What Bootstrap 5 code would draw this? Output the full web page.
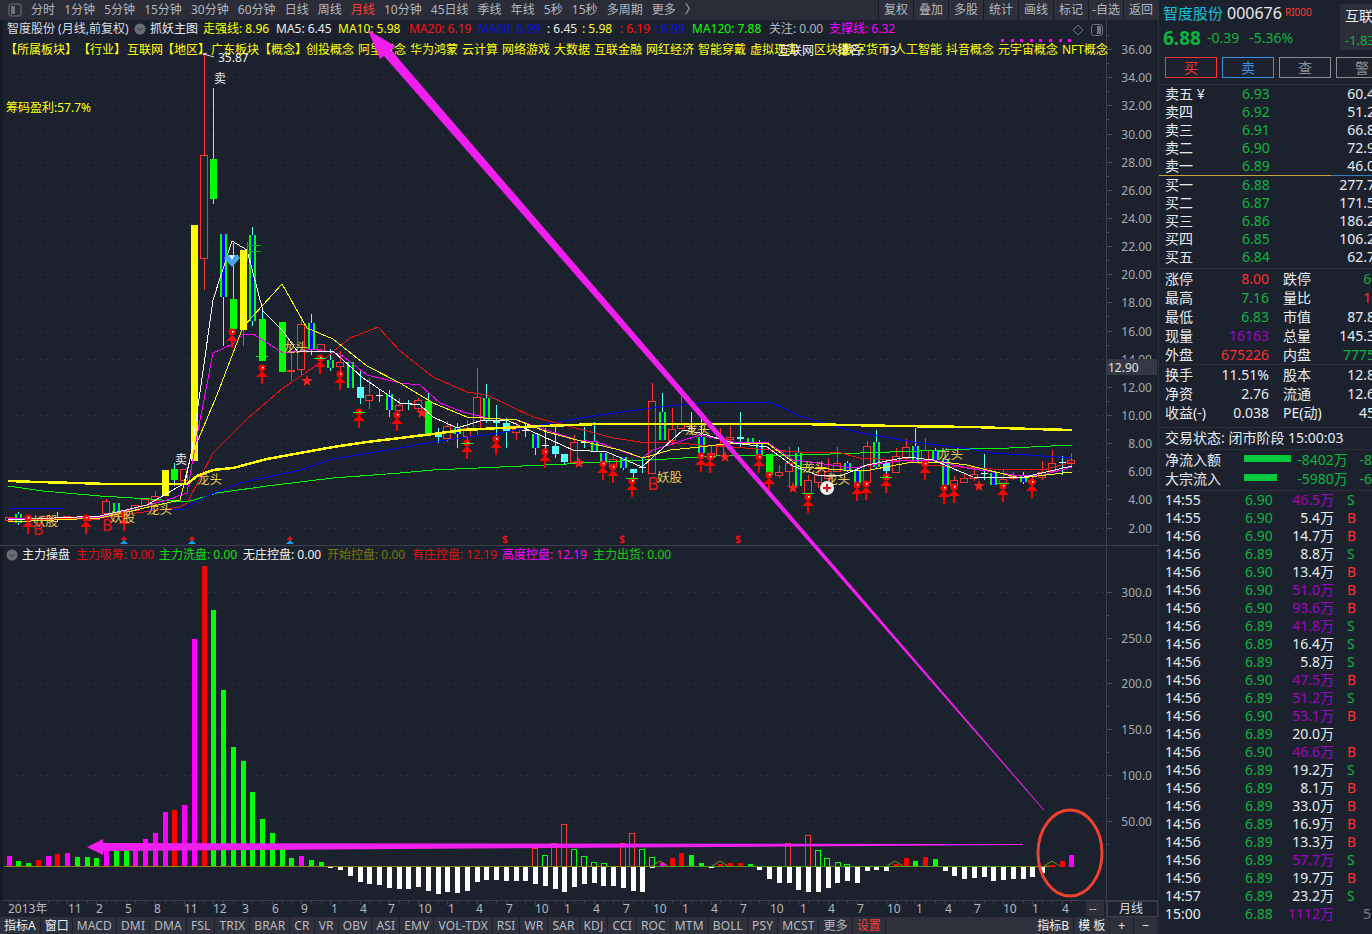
<!DOCTYPE html>
<html lang="zh-Hans">
<head>
  <meta charset="UTF-8" />
  <title>智度股份 月线</title>
  <link href="https://cdn.jsdelivr.net/npm/bootstrap@5.3.0/dist/css/bootstrap.min.css" rel="stylesheet" />
  <style>
    html, body { width: 1372px; height: 934px; overflow: hidden; background: #1c222d; }
    body, svg text { font-family: "Noto Sans", "Noto Sans CJK SC", sans-serif; }
    .stage { width: 1372px; height: 934px; position: relative; }
    .left-side { width: 1158px; }
    .right-side { width: 214px; border-left: 1px solid #2b303b; overflow: hidden; padding-left: 6px; color: #e6eaf0; }
    .tool-bar { height: 20px; background: #2a2d38; font-size: 12px; color: #b4b7bf; line-height: 20px; }
    .top-tabs { gap: 9.1px; padding-left: 8px; }
    .top-tabs .active-tab { color: #ff3b30; }
    .tool-btn { width: 35px; text-align: center; border-left: 1px solid #171b24; background: #2d303b; white-space: nowrap; }
    .chart-svg { display: block; }
    .bottom-tabs { height: 17px; background: #2e303c; font-size: 12px; line-height: 17px; color: #b9bcc4; letter-spacing: .15px; }
    .bottom-tabs span { padding: 0 4px; border-right: 1px solid #1c222d; white-space: nowrap; }
    .bottom-tabs .white-tab { color: #eef0f4; letter-spacing: 0; }
    .bottom-tabs .tight-tab { padding-right: 3px; }
    .bottom-tabs .red-tab { color: #ff3b30; letter-spacing: 0; }
    .bottom-right span { text-align: center; }
    .head-block { margin-left: -2px; }
    .head-title { height: 26px; font-size: 16px; line-height: 26px; }
    .head-title .stock-name { color: #0cc3d8; font-size: 15px; margin-right: 4px; }
    .head-title sup { color: #ff3b30; font-size: 10px; top: -3px; margin-left: 3px; }
    .head-price { height: 24px; line-height: 24px; color: #0cb53f; font-size: 14px; }
    .head-price b { font-size: 19px; width: 44px; }
    .head-price span { margin-right: 10px; }
    .sector-box { width: 32px; height: 46px; margin-top: 4px; background: #2c2f3a; font-size: 14px; padding-left: 5px; overflow: hidden; white-space: nowrap; line-height: 24px; }
    .sector-box div + div { color: #0cb53f; font-size: 13px; }
    .trade-btns { gap: 5px; margin-top: 7px; margin-bottom: 6px; }
    .trade-btns .btn { flex: 0 0 52px; height: 21px; padding: 0; font-size: 14px; line-height: 17px; border-radius: 0; border-width: 1.5px; background: transparent; }
    .btn-buy { border-color: #f33; color: #f33; }
    .btn-sell { border-color: #3a8fe0; color: #3a8fe0; }
    .btn-query { border-color: #8a8d93; color: #8a8d93; }
    .part-line { margin-left: -6px; border-top: 1px solid #2b303b; }
    .gold-line { margin-left: -6px; height: 1px; background: linear-gradient(90deg, #c9a13c 172px, #3a7fc0 172px); }
    .quote-line, .stat-line, .tick-line, .flow-line { display: flex; font-size: 14px; white-space: nowrap; }
    .quote-line { height: 18px; line-height: 18px; }
    .stat-line, .flow-line { height: 19px; line-height: 19px; }
    .tick-line { height: 18px; line-height: 18px; }
    .quote-line .q-name { width: 77px; }
    .quote-line .q-price { width: 60px; color: #0cb53f; }
    .quote-line .q-vol, .stat-line .s-val2 { flex: 1; text-align: right; margin-right: -3px; }
    .stat-line .s-name { width: 38px; }
    .stat-line .s-val { width: 66px; text-align: right; margin-right: 14px; }
    .stat-line .s-name2 { width: 42px; }
    .bid-box { padding-bottom: 2px; }
    .stat-box { padding-bottom: 5px; }
    .trade-state { height: 21px; line-height: 19px; font-size: 14px; }
    .flow-line .f-name { width: 80px; }
    .flow-line .f-bar { width: 54px; }
    .flow-line .f-bar i { display: block; height: 7px; margin-top: 5px; background: #00c83c; }
    .flow-bar-a { width: 47px !important; }
    .flow-bar-b { width: 33px !important; }
    .flow-end { margin-top: 2px; }
    .flow-line .f-val { width: 63px; color: #0cb53f; }
    .flow-line .f-more { color: #0cb53f; }
    .tick-line .t-time { width: 80px; }
    .tick-line .t-price { width: 40px; color: #0cb53f; }
    .tick-line .t-amt { width: 49px; text-align: right; }
    .tick-line .t-side { width: 16px; margin-left: 13px; }
    .tick-line .t-more { color: #7a7e86; }
    .c-up { color: #ff2d2d; }
    .c-down { color: #0cb53f; }
    .c-big { color: #a400c4; }
    .over-marks { position: absolute; left: 0; top: 0; pointer-events: none; }
  </style>
</head>
<body>

<div class="stage d-flex">
  <div class="left-side d-flex flex-column">
    <!-- 顶部周期栏 -->
    <div class="tool-bar d-flex">
      <div class="top-tabs d-flex align-items-center">
        <svg width="14" height="14" viewBox="0 0 14 14"><rect x="1" y="1" width="12" height="12" rx="2" fill="none" stroke="#70737c"/><rect x="3" y="3" width="4" height="8" fill="#70737c"/></svg>
        <span>分时</span><span>1分钟</span><span>5分钟</span><span>15分钟</span><span>30分钟</span><span>60分钟</span><span>日线</span><span>周线</span><span class="active-tab">月线</span><span>10分钟</span><span>45日线</span><span>季线</span><span>年线</span><span>5秒</span><span>15秒</span><span>多周期</span><span>更多</span><span>〉</span>
      </div>
      <div class="d-flex ms-auto">
        <span class="tool-btn">复权</span><span class="tool-btn">叠加</span><span class="tool-btn">多股</span><span class="tool-btn">统计</span><span class="tool-btn">画线</span><span class="tool-btn">标记</span><span class="tool-btn">-自选</span><span class="tool-btn">返回</span>
      </div>
    </div>

    <svg id="mainChart" class="chart-svg" width="1158" height="526" viewBox="0 20 1158 526"></svg>
    <svg id="subChart" class="chart-svg" width="1158" height="371" viewBox="0 546 1158 371"></svg>

    <!-- 底部指标栏 -->
    <div class="bottom-tabs d-flex">
      <span class="white-tab">指标A</span><span class="white-tab tight-tab">窗口</span><span>MACD</span><span>DMI</span><span>DMA</span><span>FSL</span><span>TRIX</span><span>BRAR</span><span>CR</span><span>VR</span><span>OBV</span><span>ASI</span><span>EMV</span><span>VOL-TDX</span><span>RSI</span><span>WR</span><span>SAR</span><span>KDJ</span><span>CCI</span><span>ROC</span><span>MTM</span><span>BOLL</span><span>PSY</span><span>MCST</span><span>更多</span><span class="red-tab">设置</span>
      <div class="bottom-right d-flex ms-auto">
        <span class="white-tab">指标B</span><span class="white-tab">模 板</span><span class="white-tab px-2">+</span><span class="white-tab px-2">−</span>
      </div>
    </div>
  </div>

  <div class="right-side">
    <div class="d-flex">
      <div class="head-block flex-grow-1">
        <div class="head-title"><span class="stock-name">智度股份</span>000676<sup>RI000</sup></div>
        <div class="head-price d-flex"><b>6.88</b><span>-0.39</span><span>-5.36%</span></div>
      </div>
      <div class="sector-box"><div>互联网</div><div>-1.83%</div></div>
    </div>
    <div class="trade-btns d-flex">
      <button class="btn btn-buy">买</button><button class="btn btn-sell">卖</button><button class="btn btn-query">查</button><button class="btn btn-query">警</button>
    </div>
    <div class="part-line"></div>
    <div id="askList"></div>
    <div class="gold-line"></div>
    <div id="bidList" class="bid-box"></div>
    <div class="part-line"></div>
    <div id="statA"></div>
    <div class="part-line"></div>
    <div id="statB" class="stat-box"></div>
    <div class="part-line"></div>
    <div class="trade-state">交易状态: 闭市阶段 15:00:03</div>
    <div class="part-line"></div>
    <div class="flow-line"><span class="f-name">净流入额</span><span class="f-bar"><i class="flow-bar-a"></i></span><span class="f-val">-8402万</span><span class="f-more">-8</span></div>
    <div class="flow-line"><span class="f-name">大宗流入</span><span class="f-bar"><i class="flow-bar-b"></i></span><span class="f-val">-5980万</span><span class="f-more">-6</span></div>
    <div class="part-line flow-end"></div>
    <div id="tickList"></div>
  </div>

  <!-- 手工标注 -->
  <svg class="over-marks" width="1372" height="934" viewBox="0 0 1372 934">
    <polygon points="368,30 395,46 391,50 1044.3,810 1043.7,810.4 384,56 380,59" fill="#f01ff0"/>
    <polygon points="87,847 103,839 103,843 1023,844 1023,845 103,851 103,855" fill="#f01ff0"/>
    <ellipse cx="1070" cy="853" rx="32" ry="43" fill="none" stroke="#f0402f" stroke-width="3"/>
  </svg>
</div>

<script>
  const GREEN = '#00ff00', RED = '#ff3232', CYAN = '#54ffff', YELLOW = '#ffff00', BLUE = '#0000ff', MAGENTA = '#ff00ff';
  const barX = i => Math.round(8.5 + 9.75 * i);

  // 文字
  function label(x, y, str, fill, size = 12, extra = '') {
    return `<text x="${x}" y="${y}" fill="${fill}" font-size="${size}" ${extra}>${str}</text>`;
  }
  function hline(x1, x2, y, color, dash = '') {
    return `<line x1="${x1}" x2="${x2}" y1="${y}" y2="${y}" stroke="${color}" ${dash ? `stroke-dasharray="${dash}"` : ''} shape-rendering="crispEdges"/>`;
  }
  function rect(x, y, w, h, fill, stroke = 'none') {
    return `<rect x="${x}" y="${y}" width="${w}" height="${h}" fill="${fill}" stroke="${stroke}" shape-rendering="crispEdges"/>`;
  }
  function polyline(points, color, width) {
    return `<polyline points="${points.map(p => p.join(',')).join(' ')}" fill="none" stroke="${color}" stroke-width="${width}" shape-rendering="crispEdges"/>`;
  }

  // K线: [序号, 类型, 实体上, 实体下, 影线上, 影线下]
  const candles = [
    [0,'r',517,520],[1,'b',514,523,512,525],[2,'t',519,519,515,524],[3,'r',518,520],[4,'r',516,519],[5,'t',518,518,512,522],
    [6,'r',516,518],[7,'l',517,519],[8,'r',518,520],[9,'r',517,519],[10,'r',501,513,499,514],[11,'b',503,512],[12,'r',510,515],
    [13,'r',505,510],[14,'r',499,505],[15,'r',496,500,491,500],[16,'y',470,496],[17,'g',469,480,463,486],[18,'r',469,480],
    [19,'y',225,461],[20,'r',155,258,54,290],[21,'g',159,199,88,204],[22,'b',234,297,234,346],[23,'g',299,329,243,329],
    [24,'y',250,330,250,346],[25,'b',235,321,227,326],[26,'g',319,361,307,361],[28,'g',322,372],[29,'r',370,371,353,381],
    [30,'r',324,369,316,375],[31,'b',323,350,314,355],[32,'r',344,350],[33,'b',360,368,349,371],[34,'r',362,366,351,380],
    [35,'b',362,388],[36,'c',387,398,371,404],[37,'r',395,400,378,409],[38,'t',395,395,390,402],[39,'b',394,410,390,417],
    [40,'r',405,410,398,412],[41,'t',403,403,400,410],[42,'r',400,408,398,412],[43,'g',401,435,392,435],[44,'c',434,437,428,443],
    [45,'r',426,438,421,442],[46,'b',428,434,423,448],[47,'r',428,436,420,440],[48,'r',397,428,368,435],[49,'b',398,420,384,423],
    [50,'c',420,423,405,440],[51,'c',423,431,418,448],[52,'r',429,432,422,440],[53,'t',430,430,423,437],[54,'b',434,448,434,455],
    [55,'t',445,445,428,460],[56,'c',446,454,427,458],[57,'c',454,462,454,465],[58,'r',442,462,435,462],[59,'t',442,442,427,448],
    [60,'b',442,451,422,451],[61,'b',453,463],[62,'r',459,466,455,466],[63,'b',457,468,457,470],[64,'c',469,473,469,478],
    [65,'t',467,467,457,473],[66,'r',401,473,383,473],[67,'b',412,440,393,440],[68,'r',429,440,408,445],[69,'r',424,428,395,428],
    [70,'t',428,428,412,433],[71,'b',437,453,418,453],[72,'r',453,457,445,460],[73,'r',445,455,428,455],[74,'r',437,439,425,441],
    [75,'c',437,439,412,448],[76,'b',438,443],[77,'b',443,455,440,458],[78,'g',454,475],[79,'r',472,475,465,478],[80,'r',463,471,447,487],
    [81,'b',453,486,447,486],[82,'r',480,493,475,495],[83,'r',475,482,466,488],[84,'r',471,478,458,482],[85,'r',463,471,447,472],
    [86,'b',463,471,461,472],[87,'b',471,483,468,485],[88,'r',446,482,441,482],[89,'b',442,467,430,468],[90,'c',463,471,460,475],
    [91,'r',456,472,448,473],[92,'r',447,458,439,460],[93,'b',446,463,428,463],[94,'r',450,462,438,465],[95,'b',451,460,448,463],
    [96,'b',459,485],[97,'r',480,485,476,488],[98,'r',478,482,474,482],[99,'r',474,478,466,481],[100,'t',473,473,454,480],
    [101,'b',473,485],[102,'r',479,483,470,486],[103,'r',476,478,472,480],[104,'b',476,482,472,484],[105,'r',480,482,476,484],
    [106,'r',472,477,461,480],[107,'r',463,471,450,473],[108,'t',462,462,456,475],[109,'r',460,463,453,466]
  ];

  function candleSvg([i, type, top, bottom, wickTop = top, wickBottom = bottom]) {
    const x = barX(i);
    const wick = { r: RED, y: RED, g: CYAN, b: CYAN, c: CYAN, t: CYAN, l: CYAN }[type];
    let out = rect(x, wickTop, 1, wickBottom - wickTop, wick);
    if (type === 'r') out += rect(x - 3.5, top + .5, 7, bottom - top, '#1c222d', RED);
    else if (type === 't') out += rect(x - 3, top, 7, 1, '#ffffff');
    else if (type === 'g') out += rect(x - 3, top, 7, bottom - top, GREEN);
    else if (type === 'c') out += rect(x - 3, top, 7, bottom - top, CYAN);
    else if (type === 'y') out += rect(x - 3, top, 7, bottom - top, YELLOW);
    else if (type === 'l') out += rect(x - 3, top, 7, bottom - top, BLUE);
    else out += rect(x - 3, top, 7, bottom - top, GREEN) + rect(x - 1, top, 3, bottom - top, BLUE);
    return out;
  }

  // 均线
  const lineThick = [[8,481],[37,482],[77,483],[107,484],[187,484],[197,476],[213,470],[233,468],[267,459],[300,453],[333,447],[367,442],[400,438],[433,434],[463,430],[500,428],[543,426],[600,424],[800,424],[897,426],[973,427],[1032,429],[1072,430]];
  const lineBlue = [[8,508],[63,509],[150,509],[183,509],[207,496],[240,483],[300,470],[333,459],[400,448],[433,442],[467,437],[500,433],[540,425],[600,415],[660,407],[700,403],[733,402],[770,402],[800,416],[827,424],[857,432],[913,442],[970,449],[993,453],[1027,455],[1072,458]];
  const lineGreen = [[8,486],[43,491],[100,496],[150,499],[187,502],[217,493],[267,486],[333,478],[400,473],[433,470],[500,467],[567,464],[600,462],[667,459],[733,455],[800,455],[860,453],[920,451],[970,449],[1010,448],[1072,445]];
  const lineRed = [[8,520],[100,518],[180,507],[187,503],[213,453],[247,419],[283,388],[317,365],[350,338],[378,327],[400,351],[433,377],[467,392],[487,395],[533,417],[557,423],[613,438],[647,443],[667,442],[700,445],[733,447],[770,450],[800,452],[837,452],[860,458],[910,461],[927,465],[960,467],[993,469],[1043,470],[1072,462]];
  const lineMagenta = [[8,519],[100,517],[167,500],[187,493],[197,436],[213,353],[233,344],[243,334],[253,334],[283,353],[317,349],[340,354],[367,375],[400,383],[420,385],[440,403],[463,412],[487,418],[517,420],[540,428],[577,440],[597,442],[627,453],[642,458],[653,450],[700,435],[733,442],[767,442],[793,460],[817,463],[853,468],[870,465],[907,460],[933,460],[967,468],[1020,476],[1043,475],[1072,467]];
  const lineYellow = [[8,522],[100,518],[180,500],[190,459],[217,395],[243,327],[282,284],[307,328],[333,339],[367,366],[400,383],[433,403],[467,417],[517,420],[547,432],[577,440],[620,450],[643,458],[670,450],[700,447],[733,443],[767,443],[800,467],[843,470],[870,470],[907,463],[943,462],[967,465],[1020,478],[1072,472]];
  const lineWhite = [[8,520],[100,516],[147,505],[185,483],[192,449],[213,300],[232,241],[247,250],[263,311],[283,331],[297,351],[333,351],[363,378],[400,403],[420,405],[433,417],[457,428],[483,420],[507,420],[533,432],[573,450],[607,452],[642,467],[653,457],[683,430],[700,433],[733,443],[767,447],[793,466],[817,475],[843,475],[867,465],[907,457],[933,460],[973,477],[1020,478],[1072,466]];

  // 买入箭头
  function arrowUp(x, y) {
    return `<circle cx="${x}" cy="${y}" r="3.5" fill="#ff0000"/><rect x="${x}" y="${y - 1}" width="1.5" height="1.5" fill="#fff"/>` +
      `<polygon points="${x},${y + 3} ${x + 6},${y + 9} ${x + 1},${y + 9} ${x + 1},${y + 16} ${x - 1},${y + 16} ${x - 1},${y + 9} ${x - 6},${y + 9}" fill="#ff0000"/>`;
  }
  function starAt(x, y) {
    const pts = [];
    for (let n = 0; n < 10; n++) {
      const r = n % 2 ? 2.4 : 6, a = -Math.PI / 2 + n * Math.PI / 5;
      pts.push((x + r * Math.cos(a)).toFixed(1) + ',' + (y + r * Math.sin(a)).toFixed(1));
    }
    return `<polygon points="${pts.join(' ')}" fill="#ff2020"/>`;
  }

  const arrows = [[28,518],[86,518],[124,515],[232,332],[262,368],[320,358],[340,374],[359,412],[397,415],[467,443],[496,439],[545,452],[603,464],[613,467],[632,481],[701,456],[710,457],[759,457],[769,475],[808,497],[857,485],[866,484],[886,477],[925,464],[944,488],[954,487],[1003,486],[1032,482]];
  const stars = [[307,381],[422,413],[579,463],[725,457],[793,488],[979,486]];
  const concepts = [[5,'【所属板块】'],[78,'【行业】'],[127,'互联网'],[162,'【地区】'],[211,'广东板块'],[259,'【概念】'],[306,'创投概念'],[358,'阿里概念'],[410,'华为鸿蒙'],[462,'云计算'],[502,'网络游戏'],[554,'大数据'],[594,'互联金融'],[646,'网红经济'],[698,'智能穿戴'],[750,'虚拟现实'],[814,'区块链'],[842,'数字货币'],[894,'人工智能'],[946,'抖音概念'],[998,'元宇宙概念'],[1062,'NFT概念']];
  const legend = [[7,'智度股份 (月线,前复权)','#d8dbe2'],[150,'抓妖主图','#e8eaf0'],[203,'走强线: 8.96',YELLOW],[276,'MA5: 6.45','#e8eaf0'],[338,'MA10: 5.98',YELLOW],[409,'MA20: 6.19','#ff1010'],[478,'MA60: 6.99','#0a14e0'],[547,': 6.45','#e8eaf0'],[582,': 5.98',YELLOW],[620,': 6.19','#ff1010'],[655,': 6.99','#0a14e0'],[692,'MA120: 7.88',GREEN],[769,'关注: 0.00','#b4b7bf'],[829,'支撑线: 6.32',MAGENTA]];
  const subLegend = [[22,'主力操盘','#f0f2f6'],[76,'主力吸筹: 0.00','#e01010'],[159,'主力洗盘: 0.00','#10e010'],[243,'无庄控盘: 0.00','#f0f2f6'],[327,'开始控盘: 0.00','#777700'],[412,'有庄控盘: 12.19','#e01010'],[502,'高度控盘: 12.19',MAGENTA],[593,'主力出货: 0.00','#10d010']];
  const yellowNotes = [[197,484,'龙头'],[147,514,'龙头'],[283,352,'龙头'],[685,434,'龙头'],[802,472,'龙头'],[825,484,'龙头'],[938,459,'龙头'],[110,522,'妖股'],[33,526,'妖股'],[657,482,'妖股']];

  const pricePos = p => 527.5 - (p - 2) * 14.07;
  const circleBtn = (x, y) => `<circle cx="${x}" cy="${y}" r="5.5" fill="#6b6e75"/><polyline points="${x - 2.5},${y - 1} ${x},${y + 1.5} ${x + 2.5},${y - 1}" fill="none" stroke="#2a2d36"/>`;

  function renderMain() {
    let s = rect(0, 20, 3, 526, '#161a24');
    // 网格与右轴
    for (let p = 2; p <= 36; p += 2) {
      const y = Math.round(pricePos(p)) + .5;
      s += hline(4, 1107, y, '#2a303b', '2 4');
      s += hline(1107, 1112, y, '#4a4f5a');
      s += hline(1107, 1109, Math.round(pricePos(p + 1)) + .5, '#4a4f5a');
      s += label(1152, y + 4.5, p.toFixed(2), '#a4a8b0', 12, 'text-anchor="end"');
    }
    s += `<line x1="1106.5" x2="1106.5" y1="20" y2="546" stroke="#3a3f4b"/>`;
    s += hline(0, 1158, 545.5, '#3a3f4b');

    // 均线在K线之后画
    candles.forEach(c => { s += candleSvg(c); });
    s += polyline(lineGreen, GREEN, 1) + polyline(lineBlue, BLUE, 1) + polyline(lineRed, '#f01010', 1);
    s += polyline(lineMagenta, MAGENTA, 1) + polyline(lineYellow, YELLOW, 1) + polyline(lineWhite, '#ffffff', 1);
    s += polyline(lineThick, YELLOW, 2.5);

    arrows.forEach(a => { s += arrowUp(a[0], a[1]); });
    stars.forEach(a => { s += starAt(a[0], a[1]); });
    [[467,443],[359,412],[632,478],[262,356],[320,358],[886,477],[808,493],[1003,483]].forEach(g => { s += hline(g[0] - 6, g[0] + 6, g[1], GREEN); });

    yellowNotes.forEach(n => { s += label(n[0], n[1], n[2], '#e6c84c', 12.5); });
    s += label(33, 535, 'B', '#ee1010', 16) + label(102, 531, 'B', '#ee1010', 16) + label(647, 490, 'B', '#ee1010', 18);
    s += label(214, 83, '卖', '#e8eaf0', 12) + label(175, 464, '卖', '#e8eaf0', 12);
    s += label(218, 62, '35.87', '#e8eaf0', 12);
    s += `<polyline points="207,53 203,54 207,55 214,57" fill="none" stroke="#ddd"/>`;
    s += label(6, 112, '筹码盈利:57.7%', YELLOW, 12);

    // 钻石和十字
    s += `<polygon points="226,255 238,255 240,258 232,267 224,258" fill="#4aa6e6"/><polygon points="229,255 235,255 232,260" fill="#d8f0ff"/>`;
    s += rect(247, 242, 1, 19, '#12a612') + hline(247, 261, 245.5, '#12a612') + hline(247, 261, 251.5, '#12a612');
    s += `<circle cx="827" cy="488" r="7" fill="#f2f2f2"/>` + rect(823, 487, 8, 2, '#e01010') + rect(826, 484, 2, 8, '#e01010');

    // 底部信号
    [124, 192, 290].forEach(x => {
      s += `<polygon points="${x},536 ${x + 3.5},540 ${x - 3.5},540" fill="#e01010"/><polygon points="${x},540 ${x + 4},544 ${x - 4},544" fill="#1e9be8"/>`;
    });
    [505, 622, 738].forEach(x => { s += label(x - 3, 543, '$', '#ee1010', 10, 'font-weight="700"'); });

    // 图例
    legend.forEach(l => { s += label(l[0], 33, l[1], l[2]); });
    s += circleBtn(140, 29);
    concepts.forEach(c => { s += label(c[0], 53.5, c[1], YELLOW); });
    s += label(778, 55, '互联网', '#eef0f4') + label(837, 55, '排名:', '#eef0f4') + label(883, 55, '13', '#eef0f4');
    for (let x = 1001; x < 1074; x += 9.6) s += rect(Math.round(x), 39, 3, 3, MAGENTA);
    s += `<polygon points="1078,25 1083,30 1078,35 1073,30" fill="none" stroke="#70737c"/>`;
    s += `<rect x="1091.5" y="24.5" width="11" height="11" rx="2" fill="none" stroke="#70737c"/>` + rect(1097, 26, 4, 8, '#70737c');

    // 现价标签
    s += rect(1107, 359, 50, 16, '#343843') + label(1108, 371.5, '12.90', '#e0e3e8', 12);
    document.getElementById('mainChart').innerHTML = s;
  }

  // 主力操盘柱 (i -> [颜色, 顶部y])
  const bars = 'm856 g861 g863 r860 m856 r854 m853 g857 g857 g858 m851 g851 g850 m845 m839 m833 m812 r810 m805 m639 r566 g610 g690 g747 g761 g792 g819 g833 g848 g858 m856 g860 g862 w868 w870 w876 w882 w884 w885 w888 w889 w889 w887 w891 w894 w892 w893 w891 w882 w880 w880 w881 w881 w881 w884 w886 w889 w892 w887 w884 w883 w886 w886 w888 w891 w892 w868 m863 r858 r853 g855 g863 w868 r864 r863 r863 g864 w870 w879 w883 w883 w890 w892 w892 w888 w883 w881 w883 w871 w870 w871 r864 r858 g861 r857 g859 w871 w876 w879 w878 w877 w881 w880 w879 w879 w877 w873 r865 r861 m855'.split(' ');
  const hollow = [[535,RED,848],[545,GREEN,855],[554,RED,843],[564,RED,824],[574,GREEN,849],[584,GREEN,856],[594,GREEN,862],[604,GREEN,863],[623,RED,843],[632,RED,833],[642,GREEN,849],[652,GREEN,857],[788,RED,843],[808,RED,835],[818,GREEN,850],[827,GREEN,858],[838,GREEN,862],[847,GREEN,864]];
  const dateMarks = [[8,'2013年'],[68,'11'],[96,'2'],[125,'5'],[154,'8'],[184,'11'],[213,'12'],[242,'3'],[272,'6'],[301,'9'],[331,'1'],[360,'4'],[388,'7'],[418,'10'],[448,'1'],[476,'4'],[506,'7'],[535,'10'],[564,'1'],[593,'4'],[623,'7'],[653,'10'],[682,'1'],[711,'4'],[740,'7'],[770,'10'],[800,'1'],[828,'4'],[857,'7'],[887,'10'],[916,'1'],[945,'4'],[974,'7'],[1003,'10'],[1032,'1'],[1062,'4']];

  function renderSub() {
    let s = rect(0, 546, 3, 354, '#161a24');
    for (let v = 50; v <= 300; v += 50) {
      const y = Math.round(866.5 - v * .916) + .5;
      s += hline(4, 1107, y, '#2a303b', '2 4');
      s += hline(1107, 1112, y, '#4a4f5a');
      s += hline(1107, 1109, Math.round(866.5 - (v - 25) * .916) + .5, '#4a4f5a');
      s += label(1152, y + 4.5, v >= 100 ? v.toFixed(1) : v.toFixed(2), '#a4a8b0', 12, 'text-anchor="end"');
    }
    s += `<line x1="1106.5" x2="1106.5" y1="546" y2="917" stroke="#3a3f4b"/>`;

    const colors = { m: MAGENTA, g: GREEN, r: '#ff0000', w: '#ffffff' };
    bars.forEach((b, i) => {
      const c = b[0], y = +b.slice(1), x = barX(i) - 2;
      s += c === 'w' ? rect(x, 867, 5, y - 867, colors.w) : rect(x, y, 5, 867 - y, colors[c]);
    });
    hollow.forEach(h => { s += rect(h[0] - 2.5, h[2] + .5, 5, 866 - h[2], 'none', h[1]); });

    // 零轴
    s += hline(4, 1050, 866.5, '#8a8a00');
    s += hline(650, 1020, 866.5, '#4ea000');
    [660, 720, 895, 1052].forEach(x => {
      s += `<polyline points="${x - 8},866 ${x},861 ${x + 8},866" fill="none" stroke="#8a8a00"/>`;
    });

    s += circleBtn(12, 555);
    subLegend.forEach(l => { s += label(l[0], 559, l[1], l[2]); });

    // 日期轴
    s += hline(3, 1158, 900.5, '#3a3f4b');
    for (let i = 0; i < 110; i++) s += rect(barX(i), 901, 1, 2, '#3f4450');
    for (let i = 6; i < 110; i += 3) s += rect(barX(i), 901, 1, 4, '#3f4450');
    dateMarks.forEach(d => { s += label(d[0], 913, d[1], '#b4b7bf'); });
    s += rect(1086, 901, 18, 15, '#2d303b') + label(1089, 913, '--', '#c4c7ce');
    s += rect(1107.5, 901, 50, 15.5, 'none', '#3a3f4b') + label(1119, 913, '月线', '#d8dbe2');
    document.getElementById('subChart').innerHTML = s;
  }

  // 五档
  function quoteLines(rows) {
    return rows.map(r => `<div class="quote-line"><span class="q-name">${r[0]}</span><span class="q-price">${r[1]}</span><span class="q-vol">${r[2]}</span></div>`).join('');
  }
  document.getElementById('askList').innerHTML = quoteLines([['卖五 ¥','6.93','60.4'],['卖四','6.92','51.2'],['卖三','6.91','66.8'],['卖二','6.90','72.9'],['卖一','6.89','46.0']]);
  document.getElementById('bidList').innerHTML = quoteLines([['买一','6.88','277.7'],['买二','6.87','171.5'],['买三','6.86','186.2'],['买四','6.85','106.2'],['买五','6.84','62.7']]);

  function statLines(rows) {
    return rows.map(r => `<div class="stat-line"><span class="s-name">${r[0]}</span><span class="s-val ${r[2]}">${r[1]}</span><span class="s-name2">${r[3]}</span><span class="s-val2 ${r[5]}">${r[4]}</span></div>`).join('');
  }
  document.getElementById('statA').innerHTML = statLines([
    ['涨停','8.00','c-up','跌停','6.','c-down'],
    ['最高','7.16','c-down','量比','1.','c-up'],
    ['最低','6.83','c-down','市值','87.8',''],
    ['现量','16163','c-big','总量','145.3',''],
    ['外盘','675226','c-up','内盘','7775','c-down']
  ]);
  document.getElementById('statB').innerHTML = statLines([
    ['换手','11.51%','','股本','12.8',''],
    ['净资','2.76','','流通','12.6',''],
    ['收益(-)','0.038','','PE(动)','45','']
  ]);

  // 分笔
  const ticks = [
    ['14:55','6.90','46.5万','S',1],['14:55','6.90','5.4万','B'],['14:56','6.90','14.7万','B'],['14:56','6.89','8.8万','S'],
    ['14:56','6.90','13.4万','B'],['14:56','6.90','51.0万','B',1],['14:56','6.90','93.6万','B',1],['14:56','6.89','41.8万','S',1],
    ['14:56','6.89','16.4万','S'],['14:56','6.89','5.8万','S'],['14:56','6.90','47.5万','B',1],['14:56','6.89','51.2万','S',1],
    ['14:56','6.90','53.1万','B',1],['14:56','6.89','20.0万',''],['14:56','6.90','46.6万','B',1],['14:56','6.89','19.2万','S'],
    ['14:56','6.89','8.1万','B'],['14:56','6.89','33.0万','B'],['14:56','6.89','16.9万','B'],['14:56','6.89','13.3万','B'],
    ['14:56','6.89','57.7万','S',1],['14:56','6.89','19.7万','B'],['14:57','6.89','23.2万','S'],['15:00','6.88','1112万','',1,'5']
  ];
  document.getElementById('tickList').innerHTML = ticks.map(t => `
    <div class="tick-line">
      <span class="t-time">${t[0]}</span><span class="t-price">${t[1]}</span>
      <span class="t-amt ${t[4] ? 'c-big' : ''}">${t[2]}</span>
      <span class="t-side ${t[3] === 'B' ? 'c-up' : 'c-down'}">${t[3]}</span>
      <span class="t-more">${t[5] || ''}</span>
    </div>`).join('');

  renderMain();
  renderSub();
</script>
<script src="https://cdn.jsdelivr.net/npm/bootstrap@5.3.0/dist/js/bootstrap.bundle.min.js"></script>
</body>
</html>
